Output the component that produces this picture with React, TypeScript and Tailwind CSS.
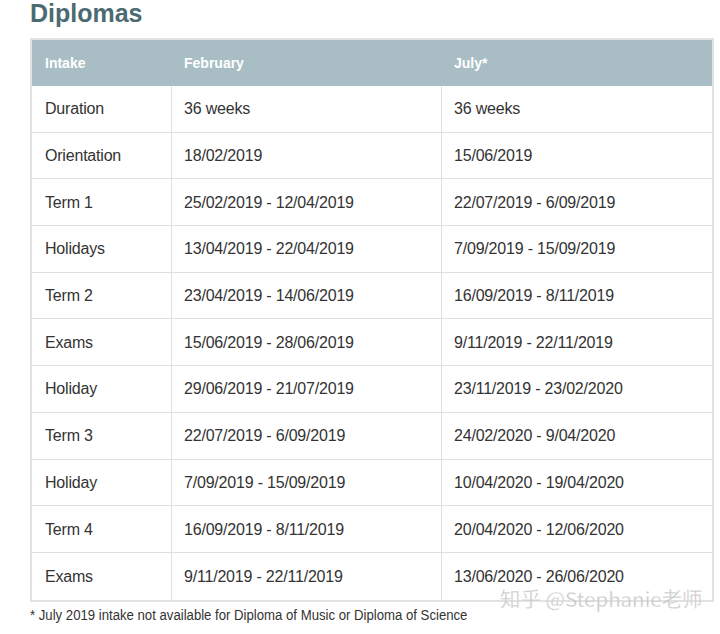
import React from "react";

const rows: [string, string, string][] = [
  ["Duration", "36 weeks", "36 weeks"],
  ["Orientation", "18/02/2019", "15/06/2019"],
  ["Term 1", "25/02/2019 - 12/04/2019", "22/07/2019 - 6/09/2019"],
  ["Holidays", "13/04/2019 - 22/04/2019", "7/09/2019 - 15/09/2019"],
  ["Term 2", "23/04/2019 - 14/06/2019", "16/09/2019 - 8/11/2019"],
  ["Exams", "15/06/2019 - 28/06/2019", "9/11/2019 - 22/11/2019"],
  ["Holiday", "29/06/2019 - 21/07/2019", "23/11/2019 - 23/02/2020"],
  ["Term 3", "22/07/2019 - 6/09/2019", "24/02/2020 - 9/04/2020"],
  ["Holiday", "7/09/2019 - 15/09/2019", "10/04/2020 - 19/04/2020"],
  ["Term 4", "16/09/2019 - 8/11/2019", "20/04/2020 - 12/06/2020"],
  ["Exams", "9/11/2019 - 22/11/2019", "13/06/2020 - 26/06/2020"],
];

export default function App() {
  return (
    <div
      className="relative w-[720px] h-[634px] bg-white overflow-hidden"
      style={{ fontFamily: '"Liberation Sans", Arial, sans-serif' }}
    >
      <h1 className="ml-[30px] pt-[1px] text-[25px] leading-none font-bold text-[#4b6a72]">
        Diplomas
      </h1>
      <div className="ml-[30px] mt-[12px] w-[684px] border-2 border-[#e2e2e2]">
        <div className="grid grid-cols-[140px_270px_270px] h-[46px] bg-[#a8bec4] text-white font-bold text-[14px] items-center">
          <div className="pl-[13px]">Intake</div>
          <div className="pl-[12px]">February</div>
          <div className="pl-[12px]">July*</div>
        </div>
        {rows.map((r, i) => (
          <div
            key={i}
            className={
              "grid grid-cols-[140px_270px_270px] h-[46.7px] text-[16px] tracking-[-0.2px] text-[#333333] " +
              (i < rows.length - 1 ? "border-b border-[#e0e0e0]" : "")
            }
          >
            <div className="pl-[13px] pt-[1px] flex items-center border-r border-[#e0e0e0]">
              {r[0]}
            </div>
            <div className="pl-[12px] pt-[1px] flex items-center border-r border-[#e0e0e0]">
              {r[1]}
            </div>
            <div className="pl-[12px] pt-[1px] flex items-center">{r[2]}</div>
          </div>
        ))}
      </div>
      <p className="ml-[30px] mt-[5px] w-[600px] origin-left scale-x-[0.94] text-[14px] leading-[16px] text-[#333333] whitespace-nowrap">
        * July 2019 intake not available for Diploma of Music or Diploma of Science
      </p>
      <div
        className="absolute left-[500px] top-[588px] text-[20.5px] leading-none text-[#bcbcbc] opacity-80 whitespace-nowrap"
        style={{
          fontFamily: '"Noto Sans CJK SC", "Liberation Sans", sans-serif',
          WebkitTextStroke: "0.3px #ffffff",
        }}
      >
        知乎 @Stephanie老师
      </div>
    </div>
  );
}
